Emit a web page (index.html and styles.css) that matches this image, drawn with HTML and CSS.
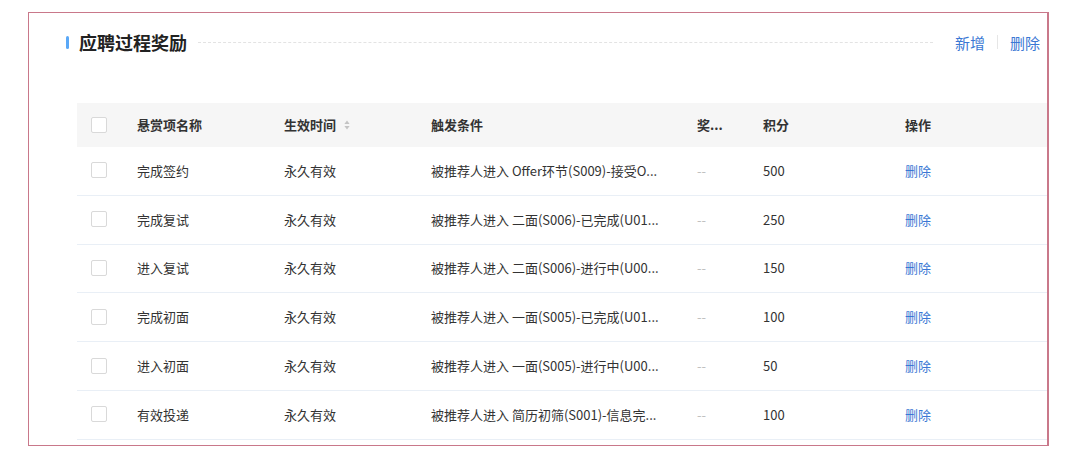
FILE: index.html
```html
<!DOCTYPE html>
<html>
<head>
  <meta charset="utf-8">
  <title>应聘过程奖励</title>
  <link rel="stylesheet" href="styles.css">
</head>
<body>

  <div class="frame">
    <div class="title-row">
      <span class="title-mark"></span>
      <h2 class="title">应聘过程奖励</h2>
      <span class="title-line"></span>
      <a class="action">新增</a>
      <span class="action-sep"></span>
      <a class="action">删除</a>
    </div>

    <div class="table">
      <div class="row head">
        <div class="cell"><span class="check"></span></div>
        <div class="cell">悬赏项名称</div>
        <div class="cell">生效时间
          <span class="sorter">
            <svg width="6" height="10" viewBox="0 0 6 10"><path d="M3 0.5L5.6 4H0.4Z" fill="#c4c4c4"/><path d="M3 9.5L5.6 6H0.4Z" fill="#c4c4c4"/></svg>
          </span>
        </div>
        <div class="cell">触发条件</div>
        <div class="cell">奖...</div>
        <div class="cell">积分</div>
        <div class="cell">操作</div>
      </div>

      <div class="row">
        <div class="cell"><span class="check"></span></div>
        <div class="cell">完成签约</div>
        <div class="cell">永久有效</div>
        <div class="cell">被推荐人进入 Offer环节(S009)-接受O...</div>
        <div class="cell empty">--</div>
        <div class="cell">500</div>
        <div class="cell"><a class="link">删除</a></div>
      </div>

      <div class="row">
        <div class="cell"><span class="check"></span></div>
        <div class="cell">完成复试</div>
        <div class="cell">永久有效</div>
        <div class="cell">被推荐人进入 二面(S006)-已完成(U01...</div>
        <div class="cell empty">--</div>
        <div class="cell">250</div>
        <div class="cell"><a class="link">删除</a></div>
      </div>

      <div class="row">
        <div class="cell"><span class="check"></span></div>
        <div class="cell">进入复试</div>
        <div class="cell">永久有效</div>
        <div class="cell">被推荐人进入 二面(S006)-进行中(U00...</div>
        <div class="cell empty">--</div>
        <div class="cell">150</div>
        <div class="cell"><a class="link">删除</a></div>
      </div>

      <div class="row">
        <div class="cell"><span class="check"></span></div>
        <div class="cell">完成初面</div>
        <div class="cell">永久有效</div>
        <div class="cell">被推荐人进入 一面(S005)-已完成(U01...</div>
        <div class="cell empty">--</div>
        <div class="cell">100</div>
        <div class="cell"><a class="link">删除</a></div>
      </div>

      <div class="row">
        <div class="cell"><span class="check"></span></div>
        <div class="cell">进入初面</div>
        <div class="cell">永久有效</div>
        <div class="cell">被推荐人进入 一面(S005)-进行中(U00...</div>
        <div class="cell empty">--</div>
        <div class="cell">50</div>
        <div class="cell"><a class="link">删除</a></div>
      </div>

      <div class="row">
        <div class="cell"><span class="check"></span></div>
        <div class="cell">有效投递</div>
        <div class="cell">永久有效</div>
        <div class="cell">被推荐人进入 简历初筛(S001)-信息完...</div>
        <div class="cell empty">--</div>
        <div class="cell">100</div>
        <div class="cell"><a class="link">删除</a></div>
      </div>
    </div>
  </div>

</body>
</html>
```

FILE: styles.css
```css
body {
  margin: 0;
  background: #fff;
  font-family: "Noto Sans CJK SC", "Noto Sans", sans-serif;
  color: #333;
}

.frame {
  box-sizing: border-box;
  margin: 12px 0 0 28px;
  width: 1021px;
  height: 434px;
  border: 1px solid #c9788a;
  border-right-width: 2px;
}

.title-row {
  display: flex;
  align-items: center;
  height: 24px;
  padding: 17px 7px 0 37px;
}

.title-mark {
  width: 3px;
  height: 13px;
  border-radius: 2px;
  background: #5aa8f7;
}

.title {
  margin: 0 0 0 10px;
  font-size: 18px;
  font-weight: bold;
  color: #222;
}

.title-line {
  flex: 1;
  margin: 0 22px 0 11px;
  border-top: 1px dashed #e3e3e3;
}

.action {
  font-size: 15px;
  color: #3b78d4;
  cursor: pointer;
}

.action-sep {
  width: 1px;
  height: 14px;
  margin: 0 12px;
  background: #e6e6e6;
}

.table {
  margin: 49px 0 0 48px;
  font-size: 13px;
}

.row {
  display: grid;
  grid-template-columns: 60px 147px 147px 266px 66px 142px 1fr;
  height: 48.8px;
  align-items: center;
  border-bottom: 1px solid #e9eff6;
  box-sizing: border-box;
}

.row.head {
  height: 44px;
  background: #f6f6f6;
  border-bottom: none;
  font-weight: bold;
}

.cell {
  display: flex;
  align-items: center;
  white-space: nowrap;
  padding-bottom: 1px;
}

.cell:first-child {
  padding-left: 14px;
}

.check {
  box-sizing: border-box;
  width: 16px;
  height: 16px;
  border: 1px solid #d9d9d9;
  border-radius: 2px;
  background: #fff;
}

.sorter {
  display: flex;
  margin-left: 8px;
}

.empty {
  color: #c0c0c0;
}

.link {
  color: #3b78d4;
  cursor: pointer;
}
```
